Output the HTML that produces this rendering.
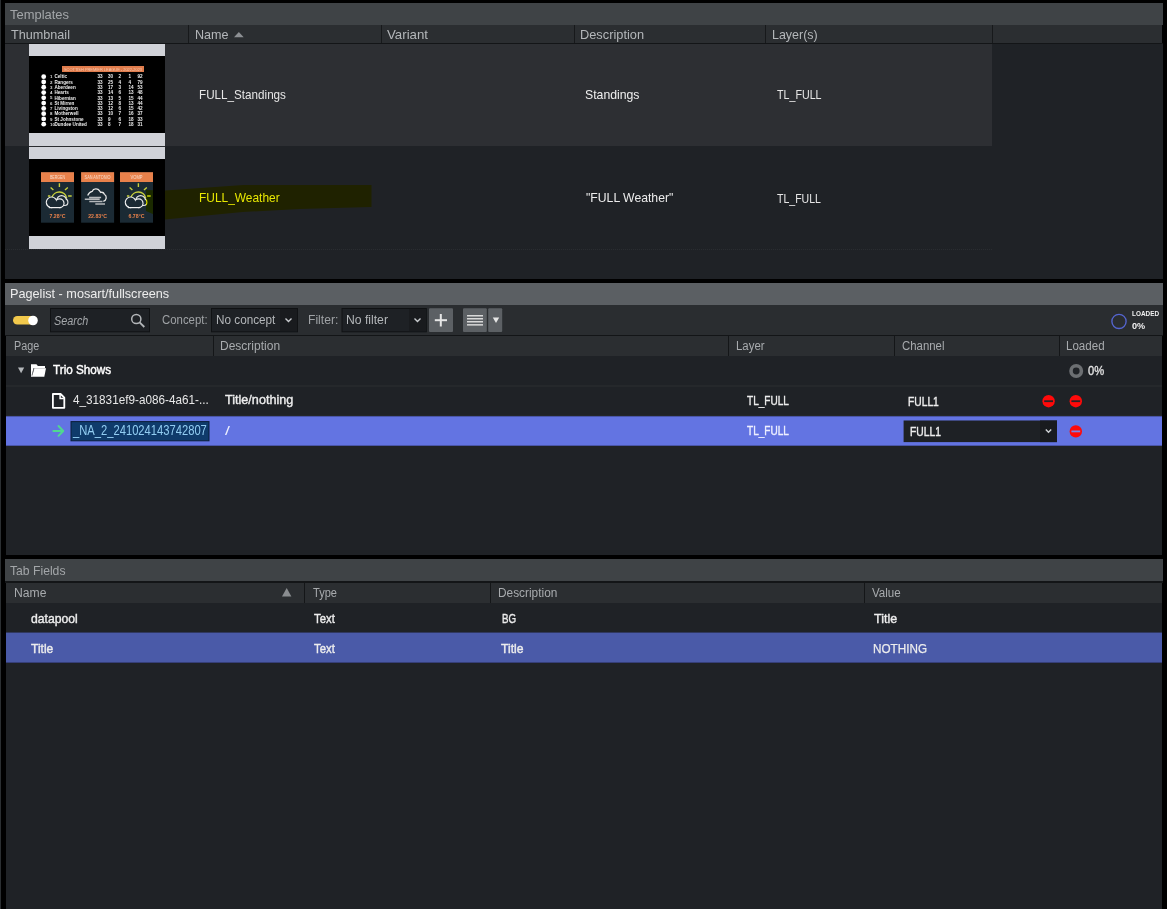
<!DOCTYPE html>
<html><head><meta charset="utf-8">
<style>
*{box-sizing:border-box;margin:0;padding:0}
html,body{width:1167px;height:909px;overflow:hidden;background:#000;font-family:"Liberation Sans",sans-serif;position:relative}
.a{position:absolute}
.t{position:absolute;white-space:nowrap;line-height:1}
</style></head>
<body>
<div class="a" style="left:0px;top:0px;width:1px;height:909px;background:#2b2f32;"></div>
<div class="a" style="left:5px;top:3px;width:1158px;height:22px;background:#3f4346;"></div>
<div class="t" style="left:9.90px;top:7.85px;font-size:13px;color:#a3a6a9;font-weight:normal;transform:scaleX(0.9949);transform-origin:0 0;">Templates</div>
<div class="a" style="left:5px;top:25px;width:1157px;height:18px;background:#2b2e31;"></div>
<div class="a" style="left:5px;top:43px;width:1158px;height:1px;background:#131517;"></div>
<div class="a" style="left:5px;top:44px;width:1158px;height:235px;background:#1f2226;"></div>
<div class="a" style="left:5px;top:44px;width:987px;height:102px;background:#2d2f33;"></div>
<div class="a" style="left:188px;top:25px;width:1px;height:18px;background:#17191b;"></div>
<div class="a" style="left:381px;top:25px;width:1px;height:18px;background:#17191b;"></div>
<div class="a" style="left:574px;top:25px;width:1px;height:18px;background:#17191b;"></div>
<div class="a" style="left:765px;top:25px;width:1px;height:18px;background:#17191b;"></div>
<div class="a" style="left:992px;top:25px;width:1px;height:18px;background:#17191b;"></div>
<div class="t" style="left:11.10px;top:27.95px;font-size:13px;color:#b4b7ba;font-weight:normal;transform:scaleX(0.9717);transform-origin:0 0;">Thumbnail</div>
<div class="t" style="left:194.73px;top:27.75px;font-size:13px;color:#b4b7ba;font-weight:normal;transform:scaleX(0.9676);transform-origin:0 0;">Name</div>
<svg class="a" style="left:234px;top:32px" width="10" height="5.5"><polygon points="0,5.2 4.85,0 9.7,5.2" fill="#8d9094"/></svg>
<div class="t" style="left:387.10px;top:27.75px;font-size:13px;color:#b4b7ba;font-weight:normal;transform:scaleX(1.0200);transform-origin:0 0;">Variant</div>
<div class="t" style="left:580.42px;top:27.65px;font-size:13px;color:#b4b7ba;font-weight:normal;transform:scaleX(0.9844);transform-origin:0 0;">Description</div>
<div class="t" style="left:771.74px;top:27.65px;font-size:13px;color:#b4b7ba;font-weight:normal;transform:scaleX(0.9587);transform-origin:0 0;">Layer(s)</div>
<div class="a" style="left:5px;top:249px;width:987px;height:1px;background:transparent;background-image:repeating-linear-gradient(90deg,#2a2d31 0 1px,transparent 1px 2px)"></div>
<div class="a" style="left:29px;top:146px;width:136px;height:1px;background:#2a2c30;"></div>
<div class="t" style="left:198.80px;top:87.85px;font-size:13px;color:#e6e6e6;font-weight:normal;transform:scaleX(0.8979);transform-origin:0 0;">FULL_Standings</div>
<div class="t" style="left:584.66px;top:87.85px;font-size:13px;color:#f0f0f0;font-weight:normal;transform:scaleX(0.9421);transform-origin:0 0;">Standings</div>
<div class="t" style="left:776.60px;top:88.15px;font-size:13px;color:#e6e6e6;font-weight:normal;transform:scaleX(0.8222);transform-origin:0 0;">TL_FULL</div>
<div class="a" style="left:29px;top:44px;width:136px;height:12px;background:#d0d2d8;"></div>
<div class="a" style="left:29px;top:56px;width:136px;height:77px;background:#000;"></div>
<div class="a" style="left:29px;top:133px;width:136px;height:13px;background:#d0d2d8;"></div>
<svg class="a" style="left:29px;top:56px" width="136" height="77"><rect x="33" y="10" width="82" height="6" fill="#e07c4c"/><text x="35" y="14.6" font-size="4.4" fill="#f6c9b0" textLength="78" lengthAdjust="spacingAndGlyphs" font-family="Liberation Sans">SCOTTISH PREMIER LEAGUE - 2022-2023</text><circle cx="14.7" cy="20.70" r="2.4" fill="#fff"/><text x="21" y="22.30" font-size="4.4" fill="#ddd" font-family="Liberation Sans" font-weight="bold">1</text><text x="25.5" y="22.40" font-size="4.6" fill="#eee" font-family="Liberation Sans" font-weight="bold">Celtic</text><text x="68.5" y="22.40" font-size="4.6" fill="#eee" font-family="Liberation Sans" font-weight="bold">33</text><text x="79" y="22.40" font-size="4.6" fill="#eee" font-family="Liberation Sans" font-weight="bold">30</text><text x="89.5" y="22.40" font-size="4.6" fill="#eee" font-family="Liberation Sans" font-weight="bold">2</text><text x="99.5" y="22.40" font-size="4.6" fill="#eee" font-family="Liberation Sans" font-weight="bold">1</text><text x="108.5" y="22.40" font-size="4.6" fill="#eee" font-family="Liberation Sans" font-weight="bold">92</text><circle cx="14.7" cy="25.98" r="2.4" fill="#fff"/><text x="21" y="27.58" font-size="4.4" fill="#ddd" font-family="Liberation Sans" font-weight="bold">2</text><text x="25.5" y="27.68" font-size="4.6" fill="#eee" font-family="Liberation Sans" font-weight="bold">Rangers</text><text x="68.5" y="27.68" font-size="4.6" fill="#eee" font-family="Liberation Sans" font-weight="bold">33</text><text x="79" y="27.68" font-size="4.6" fill="#eee" font-family="Liberation Sans" font-weight="bold">25</text><text x="89.5" y="27.68" font-size="4.6" fill="#eee" font-family="Liberation Sans" font-weight="bold">4</text><text x="99.5" y="27.68" font-size="4.6" fill="#eee" font-family="Liberation Sans" font-weight="bold">4</text><text x="108.5" y="27.68" font-size="4.6" fill="#eee" font-family="Liberation Sans" font-weight="bold">79</text><circle cx="14.7" cy="31.26" r="2.4" fill="#fff"/><text x="21" y="32.86" font-size="4.4" fill="#ddd" font-family="Liberation Sans" font-weight="bold">3</text><text x="25.5" y="32.96" font-size="4.6" fill="#eee" font-family="Liberation Sans" font-weight="bold">Aberdeen</text><text x="68.5" y="32.96" font-size="4.6" fill="#eee" font-family="Liberation Sans" font-weight="bold">33</text><text x="79" y="32.96" font-size="4.6" fill="#eee" font-family="Liberation Sans" font-weight="bold">17</text><text x="89.5" y="32.96" font-size="4.6" fill="#eee" font-family="Liberation Sans" font-weight="bold">3</text><text x="99.5" y="32.96" font-size="4.6" fill="#eee" font-family="Liberation Sans" font-weight="bold">14</text><text x="108.5" y="32.96" font-size="4.6" fill="#eee" font-family="Liberation Sans" font-weight="bold">53</text><circle cx="14.7" cy="36.54" r="2.4" fill="#fff"/><text x="21" y="38.14" font-size="4.4" fill="#ddd" font-family="Liberation Sans" font-weight="bold">4</text><text x="25.5" y="38.24" font-size="4.6" fill="#eee" font-family="Liberation Sans" font-weight="bold">Hearts</text><text x="68.5" y="38.24" font-size="4.6" fill="#eee" font-family="Liberation Sans" font-weight="bold">33</text><text x="79" y="38.24" font-size="4.6" fill="#eee" font-family="Liberation Sans" font-weight="bold">14</text><text x="89.5" y="38.24" font-size="4.6" fill="#eee" font-family="Liberation Sans" font-weight="bold">6</text><text x="99.5" y="38.24" font-size="4.6" fill="#eee" font-family="Liberation Sans" font-weight="bold">13</text><text x="108.5" y="38.24" font-size="4.6" fill="#eee" font-family="Liberation Sans" font-weight="bold">48</text><circle cx="14.7" cy="41.82" r="2.4" fill="#fff"/><text x="21" y="43.42" font-size="4.4" fill="#ddd" font-family="Liberation Sans" font-weight="bold">5</text><text x="25.5" y="43.52" font-size="4.6" fill="#eee" font-family="Liberation Sans" font-weight="bold">Hibernian</text><text x="68.5" y="43.52" font-size="4.6" fill="#eee" font-family="Liberation Sans" font-weight="bold">33</text><text x="79" y="43.52" font-size="4.6" fill="#eee" font-family="Liberation Sans" font-weight="bold">13</text><text x="89.5" y="43.52" font-size="4.6" fill="#eee" font-family="Liberation Sans" font-weight="bold">5</text><text x="99.5" y="43.52" font-size="4.6" fill="#eee" font-family="Liberation Sans" font-weight="bold">15</text><text x="108.5" y="43.52" font-size="4.6" fill="#eee" font-family="Liberation Sans" font-weight="bold">44</text><circle cx="14.7" cy="47.10" r="2.4" fill="#fff"/><text x="21" y="48.70" font-size="4.4" fill="#ddd" font-family="Liberation Sans" font-weight="bold">6</text><text x="25.5" y="48.80" font-size="4.6" fill="#eee" font-family="Liberation Sans" font-weight="bold">St Mirren</text><text x="68.5" y="48.80" font-size="4.6" fill="#eee" font-family="Liberation Sans" font-weight="bold">33</text><text x="79" y="48.80" font-size="4.6" fill="#eee" font-family="Liberation Sans" font-weight="bold">12</text><text x="89.5" y="48.80" font-size="4.6" fill="#eee" font-family="Liberation Sans" font-weight="bold">8</text><text x="99.5" y="48.80" font-size="4.6" fill="#eee" font-family="Liberation Sans" font-weight="bold">13</text><text x="108.5" y="48.80" font-size="4.6" fill="#eee" font-family="Liberation Sans" font-weight="bold">44</text><circle cx="14.7" cy="52.38" r="2.4" fill="#fff"/><text x="21" y="53.98" font-size="4.4" fill="#ddd" font-family="Liberation Sans" font-weight="bold">7</text><text x="25.5" y="54.08" font-size="4.6" fill="#eee" font-family="Liberation Sans" font-weight="bold">Livingston</text><text x="68.5" y="54.08" font-size="4.6" fill="#eee" font-family="Liberation Sans" font-weight="bold">33</text><text x="79" y="54.08" font-size="4.6" fill="#eee" font-family="Liberation Sans" font-weight="bold">12</text><text x="89.5" y="54.08" font-size="4.6" fill="#eee" font-family="Liberation Sans" font-weight="bold">6</text><text x="99.5" y="54.08" font-size="4.6" fill="#eee" font-family="Liberation Sans" font-weight="bold">15</text><text x="108.5" y="54.08" font-size="4.6" fill="#eee" font-family="Liberation Sans" font-weight="bold">42</text><circle cx="14.7" cy="57.66" r="2.4" fill="#fff"/><text x="21" y="59.26" font-size="4.4" fill="#ddd" font-family="Liberation Sans" font-weight="bold">8</text><text x="25.5" y="59.36" font-size="4.6" fill="#eee" font-family="Liberation Sans" font-weight="bold">Motherwell</text><text x="68.5" y="59.36" font-size="4.6" fill="#eee" font-family="Liberation Sans" font-weight="bold">33</text><text x="79" y="59.36" font-size="4.6" fill="#eee" font-family="Liberation Sans" font-weight="bold">10</text><text x="89.5" y="59.36" font-size="4.6" fill="#eee" font-family="Liberation Sans" font-weight="bold">7</text><text x="99.5" y="59.36" font-size="4.6" fill="#eee" font-family="Liberation Sans" font-weight="bold">16</text><text x="108.5" y="59.36" font-size="4.6" fill="#eee" font-family="Liberation Sans" font-weight="bold">37</text><circle cx="14.7" cy="62.94" r="2.4" fill="#fff"/><text x="21" y="64.54" font-size="4.4" fill="#ddd" font-family="Liberation Sans" font-weight="bold">9</text><text x="25.5" y="64.64" font-size="4.6" fill="#eee" font-family="Liberation Sans" font-weight="bold">St Johnstone</text><text x="68.5" y="64.64" font-size="4.6" fill="#eee" font-family="Liberation Sans" font-weight="bold">33</text><text x="79" y="64.64" font-size="4.6" fill="#eee" font-family="Liberation Sans" font-weight="bold">9</text><text x="89.5" y="64.64" font-size="4.6" fill="#eee" font-family="Liberation Sans" font-weight="bold">6</text><text x="99.5" y="64.64" font-size="4.6" fill="#eee" font-family="Liberation Sans" font-weight="bold">18</text><text x="108.5" y="64.64" font-size="4.6" fill="#eee" font-family="Liberation Sans" font-weight="bold">33</text><circle cx="14.7" cy="68.22" r="2.4" fill="#fff"/><text x="21" y="69.82" font-size="4.4" fill="#ddd" font-family="Liberation Sans" font-weight="bold">10</text><text x="25.5" y="69.92" font-size="4.6" fill="#eee" font-family="Liberation Sans" font-weight="bold">Dundee United</text><text x="68.5" y="69.92" font-size="4.6" fill="#eee" font-family="Liberation Sans" font-weight="bold">33</text><text x="79" y="69.92" font-size="4.6" fill="#eee" font-family="Liberation Sans" font-weight="bold">8</text><text x="89.5" y="69.92" font-size="4.6" fill="#eee" font-family="Liberation Sans" font-weight="bold">7</text><text x="99.5" y="69.92" font-size="4.6" fill="#eee" font-family="Liberation Sans" font-weight="bold">18</text><text x="108.5" y="69.92" font-size="4.6" fill="#eee" font-family="Liberation Sans" font-weight="bold">31</text></svg>
<div class="a" style="left:29px;top:147px;width:136px;height:12px;background:#d0d2d8;"></div>
<div class="a" style="left:29px;top:159px;width:136px;height:77px;background:#000;"></div>
<div class="a" style="left:29px;top:236px;width:136px;height:13px;background:#d0d2d8;"></div>
<svg class="a" style="left:29px;top:159px" width="136" height="77"><rect x="12" y="13.2" width="33" height="50.5" fill="#1b2a34"/><rect x="12" y="13.2" width="33" height="9.8" fill="#e8814b"/><text x="21.0" y="20" font-size="5" fill="#f8dccb" textLength="15" lengthAdjust="spacingAndGlyphs" font-family="Liberation Sans">BERGEN</text><text x="28.5" y="59" font-size="5.2" fill="#e8814b" text-anchor="middle" font-family="Liberation Sans" font-weight="bold">7.28°C</text><path d="M22.9,38.6 A7.6,7.6 0 0 1 37.7,39.3" fill="none" stroke="#c8d03c" stroke-width="1.5"/><path d="M30.4,24.3 L30.4,27.9 M21.6,28.4 L24.4,30.9 M38.8,28.4 L36,31 M18.9,37 L21.3,37 M39.1,37 L42.7,37" stroke="#c8d03c" stroke-width="1.4"/><g stroke="#e8e8e8" stroke-width="2.3"><circle cx="32.6" cy="41.4" r="4.2"/><circle cx="35.6" cy="43.2" r="2.7"/></g><g fill="#1b2a34"><circle cx="32.6" cy="41.4" r="4.2"/><circle cx="35.6" cy="43.2" r="2.7"/></g><g stroke="#f2f2f2" stroke-width="2.4"><circle cx="22.6" cy="43.3" r="4.7"/><circle cx="30.6" cy="44.2" r="3.8"/><rect x="21" y="43" width="10" height="5"/></g><g fill="#1b2a34"><circle cx="22.6" cy="43.3" r="4.7"/><circle cx="30.6" cy="44.2" r="3.8"/><rect x="21" y="43" width="10" height="5"/></g><rect x="52.1" y="13.2" width="33" height="50.5" fill="#1b2a34"/><rect x="52.1" y="13.2" width="33" height="9.8" fill="#e8814b"/><text x="55.599999999999994" y="20" font-size="5" fill="#f8dccb" textLength="26" lengthAdjust="spacingAndGlyphs" font-family="Liberation Sans">SAN ANTONIO</text><text x="68.6" y="59" font-size="5.2" fill="#e8814b" text-anchor="middle" font-family="Liberation Sans" font-weight="bold">22.83°C</text><path d="M58.7,36.5 C59.7,34.2 61.5,32.7 63.1,32.4 A4.2,4.2 0 0 1 70.6,31.9 L71.7,33.4 A3.2,3.2 0 0 1 75.4,35.3 A3.9,3.9 0 0 1 74.3,42.4" fill="none" stroke="#e6e6e6" stroke-width="1.3"/><path d="M60.1,38.4 L72.1,38.4 M55.800000000000004,40.2 L70.7,40.2 M60.3,42.5 L73.5,42.5 M66.3,44.9 L76.0,44.9" stroke="#b5b8bb" stroke-width="1.5"/><rect x="91" y="13.2" width="33" height="50.5" fill="#1b2a34"/><rect x="91" y="13.2" width="33" height="9.8" fill="#e8814b"/><text x="101.5" y="20" font-size="5" fill="#f8dccb" textLength="12" lengthAdjust="spacingAndGlyphs" font-family="Liberation Sans">VOMP</text><text x="107.5" y="59" font-size="5.2" fill="#e8814b" text-anchor="middle" font-family="Liberation Sans" font-weight="bold">6.78°C</text><path d="M101.9,38.6 A7.6,7.6 0 0 1 116.7,39.3" fill="none" stroke="#c8d03c" stroke-width="1.5"/><path d="M109.4,24.3 L109.4,27.9 M100.6,28.4 L103.4,30.9 M117.8,28.4 L115,31 M97.9,37 L100.3,37 M118.1,37 L121.7,37" stroke="#c8d03c" stroke-width="1.4"/><g stroke="#e8e8e8" stroke-width="2.3"><circle cx="111.6" cy="41.4" r="4.2"/><circle cx="114.6" cy="43.2" r="2.7"/></g><g fill="#1b2a34"><circle cx="111.6" cy="41.4" r="4.2"/><circle cx="114.6" cy="43.2" r="2.7"/></g><g stroke="#f2f2f2" stroke-width="2.4"><circle cx="101.6" cy="43.3" r="4.7"/><circle cx="109.6" cy="44.2" r="3.8"/><rect x="100" y="43" width="10" height="5"/></g><g fill="#1b2a34"><circle cx="101.6" cy="43.3" r="4.7"/><circle cx="109.6" cy="44.2" r="3.8"/><rect x="100" y="43" width="10" height="5"/></g></svg>
<div class="t" style="left:198.68px;top:191.35px;font-size:13px;color:#e8e8e8;font-weight:normal;transform:scaleX(0.9172);transform-origin:0 0;">FULL_Weather</div>
<div class="t" style="left:585.60px;top:191.35px;font-size:13px;color:#ececec;font-weight:normal;transform:scaleX(0.9387);transform-origin:0 0;">&quot;FULL Weather&quot;</div>
<div class="t" style="left:777.00px;top:191.55px;font-size:13px;color:#e6e6e6;font-weight:normal;transform:scaleX(0.8111);transform-origin:0 0;">TL_FULL</div>
<svg class="a" style="left:0;top:0;mix-blend-mode:multiply" width="400" height="260"><polygon points="146,190 165,190.5 243,185 371.5,185 371.5,207 300,209 243,212 165,219.5 146,211" fill="#ffff00"/></svg>
<div class="a" style="left:5px;top:283px;width:1158px;height:22px;background:#5b5f63;"></div>
<div class="t" style="left:9.51px;top:288.32px;font-size:12.8px;color:#eeeeee;font-weight:normal;transform:scaleX(0.9900);transform-origin:0 0;">Pagelist - mosart/fullscreens</div>
<div class="a" style="left:5px;top:305px;width:1158px;height:30px;background:#2a2d30;"></div>
<div class="a" style="left:5px;top:335px;width:1158px;height:1px;background:#131517;"></div>
<div class="a" style="left:6px;top:336px;width:1156px;height:20px;background:#2b2e31;"></div>
<div class="a" style="left:6px;top:356px;width:1156px;height:199px;background:#1f2226;"></div>
<svg class="a" style="left:0;top:300px" width="1167" height="40"><rect x="13" y="16" width="24" height="8.5" rx="4.25" fill="#f2c94c"/><circle cx="33" cy="20.5" r="4.8" fill="#ffffff"/><rect x="50.5" y="8.5" width="99" height="23.3" fill="#1e2125" stroke="#101214" stroke-width="1"/><circle cx="136.3" cy="19" r="4.6" fill="none" stroke="#b3b6b9" stroke-width="1.5"/><line x1="139.6" y1="22.3" x2="144.3" y2="27" stroke="#b3b6b9" stroke-width="1.8"/><rect x="211.5" y="8.5" width="86" height="23.3" fill="#1e2125" stroke="#101214" stroke-width="1"/><rect x="280" y="9" width="17" height="22.3" fill="#191b1e"/><polyline points="285.5,18.5 288.5,21.5 291.5,18.5" fill="none" stroke="#c8cbce" stroke-width="1.4"/><rect x="342" y="8.5" width="84.3" height="23.3" fill="#1e2125" stroke="#101214" stroke-width="1"/><rect x="409" y="9" width="17" height="22.3" fill="#191b1e"/><polyline points="414.5,18.5 417.5,21.5 420.5,18.5" fill="none" stroke="#c8cbce" stroke-width="1.4"/><rect x="429" y="8.3" width="24" height="23.6" rx="1" fill="#5c6064"/><rect x="434.8" y="19.2" width="12.2" height="2" fill="#e6e6e6"/><rect x="439.8" y="14" width="2" height="12.5" fill="#e6e6e6"/><rect x="463" y="8.3" width="23.8" height="23.6" rx="1" fill="#5c6064"/><rect x="467" y="15" width="16" height="1.5" fill="#d9d9d9"/><rect x="467" y="18" width="16" height="1.5" fill="#d9d9d9"/><rect x="467" y="21" width="16" height="1.5" fill="#d9d9d9"/><rect x="467" y="24.1" width="16" height="1.5" fill="#d9d9d9"/><rect x="488.2" y="8.3" width="14" height="23.6" rx="1" fill="#5c6064"/><polygon points="492.8,17.5 499.2,17.5 496,23" fill="#e6e6e6"/><circle cx="1119" cy="21.4" r="7.1" fill="none" stroke="#5565d0" stroke-width="1.35"/></svg>
<div class="t" style="left:54.20px;top:315.20px;font-size:12px;color:#a6a9ac;font-weight:normal;transform:scaleX(0.9026);transform-origin:0 0;font-style:italic;">Search</div>
<div class="t" style="left:162.30px;top:313.70px;font-size:12px;color:#9fa2a5;font-weight:normal;transform:scaleX(0.9489);transform-origin:0 0;">Concept:</div>
<div class="t" style="left:215.82px;top:313.70px;font-size:12px;color:#b4b7ba;font-weight:normal;transform:scaleX(0.9783);transform-origin:0 0;">No concept</div>
<div class="t" style="left:308.39px;top:313.70px;font-size:12px;color:#9fa2a5;font-weight:normal;transform:scaleX(1.0107);transform-origin:0 0;">Filter:</div>
<div class="t" style="left:345.99px;top:313.70px;font-size:12px;color:#b4b7ba;font-weight:normal;transform:scaleX(1.0146);transform-origin:0 0;">No filter</div>
<div class="t" style="left:1131.70px;top:311.32px;font-size:6.8px;color:#f2f2f2;font-weight:bold;transform:scaleX(0.9414);transform-origin:0 0;">LOADED</div>
<div class="t" style="left:1131.70px;top:320.84px;font-size:9.6px;color:#f2f2f2;font-weight:bold;transform:scaleX(0.9500);transform-origin:0 0;">0%</div>
<div class="a" style="left:213px;top:336px;width:1px;height:20px;background:#141618;"></div>
<div class="a" style="left:728px;top:336px;width:1px;height:20px;background:#141618;"></div>
<div class="a" style="left:894px;top:336px;width:1px;height:20px;background:#141618;"></div>
<div class="a" style="left:1059px;top:336px;width:1px;height:20px;background:#141618;"></div>
<div class="t" style="left:13.74px;top:339.98px;font-size:12.5px;color:#a8abae;font-weight:normal;transform:scaleX(0.8643);transform-origin:0 0;">Page</div>
<div class="t" style="left:219.64px;top:339.98px;font-size:12.5px;color:#a8abae;font-weight:normal;transform:scaleX(0.9607);transform-origin:0 0;">Description</div>
<div class="t" style="left:735.99px;top:339.98px;font-size:12.5px;color:#a8abae;font-weight:normal;transform:scaleX(0.9133);transform-origin:0 0;">Layer</div>
<div class="t" style="left:901.90px;top:339.98px;font-size:12.5px;color:#a8abae;font-weight:normal;transform:scaleX(0.9109);transform-origin:0 0;">Channel</div>
<div class="t" style="left:1066.48px;top:339.98px;font-size:12.5px;color:#a8abae;font-weight:normal;transform:scaleX(0.9250);transform-origin:0 0;">Loaded</div>
<div class="a" style="left:6px;top:385px;width:1156px;height:2px;background:#25282b;"></div>
<div class="a" style="left:6px;top:415px;width:1156px;height:1px;background:#24272a;"></div>
<div class="a" style="left:6px;top:416px;width:1156px;height:30px;background:#6374e2;"></div>
<div class="a" style="left:6px;top:416px;width:1156px;height:1px;background:#4a56a8;"></div>
<div class="a" style="left:6px;top:445px;width:1156px;height:1px;background:#4a56a8;"></div>
<svg class="a" style="left:0;top:356px" width="1167" height="100"><polygon points="18,11.5 24.2,11.5 21.1,17.2" fill="#b5b8bb"/><path d="M31,20.7 L31,8.2 L36.4,8.2 L37.9,10 L45,10 L45,12.2 L33.4,12.2 L31.9,20.7 Z" fill="#ffffff"/><path d="M31.7,20.7 L34.2,12.3 L46,12.3 L44.3,20.7 Z" fill="#ffffff"/><path d="M33.9,12.6 L31.9,19.6" stroke="#6a6d70" stroke-width="0.9"/><circle cx="1076.2" cy="15" r="5.2" fill="none" stroke="#6c6f72" stroke-width="3.6"/><path d="M52.9,38 L60.6,38 L64.3,41.7 L64.3,51.8 L52.9,51.8 Z" fill="none" stroke="#ffffff" stroke-width="1.8" stroke-linejoin="round"/><path d="M60.1,38.6 L60.1,42.4 L63.8,42.4" fill="none" stroke="#ffffff" stroke-width="1.5"/><circle cx="1048.6" cy="45.2" r="6.2" fill="#ff0a0a"/><rect x="1044.2" y="44.3" width="8.8" height="1.8" fill="#2a2326"/><circle cx="1075.8" cy="45.2" r="6.2" fill="#ff0a0a"/><rect x="1071.4" y="44.3" width="8.8" height="1.8" fill="#2a2326"/><circle cx="1075.8" cy="75.4" r="6.2" fill="#ff0a0a"/><rect x="1071.4" y="74.5" width="8.8" height="1.8" fill="#7a86e6"/><path d="M53.3,75 L62.6,75 M58.5,70 L63.3,75 L58.5,79.8" fill="none" stroke="#4fd890" stroke-width="1.9" stroke-linecap="round" stroke-linejoin="round"/><rect x="71" y="65.6" width="138" height="19.2" fill="#0f3b6b" stroke="#0a1e3a" stroke-width="1"/><rect x="903.6" y="64.5" width="153.4" height="21.6" fill="#1e2125"/><rect x="1040" y="64.5" width="17" height="21.6" fill="#191b1e"/><polyline points="1045.8,73.5 1048.5,76.2 1051.2,73.5" fill="none" stroke="#d0d3d6" stroke-width="1.4"/></svg>
<div class="t" style="left:53.00px;top:363.35px;font-size:13px;color:#ffffff;font-weight:normal;transform:scaleX(0.9015);transform-origin:0 0;-webkit-text-stroke:0.45px #ffffff;">Trio Shows</div>
<div class="t" style="left:1087.80px;top:364.62px;font-size:12.8px;color:#e6e6e6;font-weight:normal;transform:scaleX(0.8737);transform-origin:0 0;-webkit-text-stroke:0.3px #e6e6e6;">0%</div>
<div class="t" style="left:72.80px;top:393.32px;font-size:13.5px;color:#e8e8e8;font-weight:normal;transform:scaleX(0.8690);transform-origin:0 0;">4_31831ef9-a086-4a61-...</div>
<div class="t" style="left:225.40px;top:393.30px;font-size:13.3px;color:#ededed;font-weight:normal;transform:scaleX(0.9486);transform-origin:0 0;-webkit-text-stroke:0.4px #ededed;">Title/nothing</div>
<div class="t" style="left:747.30px;top:394.32px;font-size:13.5px;color:#ededed;font-weight:normal;transform:scaleX(0.7456);transform-origin:0 0;-webkit-text-stroke:0.4px #ededed;">TL_FULL</div>
<div class="t" style="left:907.80px;top:394.65px;font-size:13px;color:#ededed;font-weight:normal;transform:scaleX(0.7897);transform-origin:0 0;-webkit-text-stroke:0.4px #ededed;">FULL1</div>
<div class="t" style="left:72.81px;top:423.57px;font-size:13.8px;color:#92cdf2;font-weight:normal;transform:scaleX(0.8114);transform-origin:0 0;">_NA_2_241024143742807</div>
<div class="t" style="left:225.00px;top:424.05px;font-size:13px;color:#eef0ff;font-weight:normal;transform:scaleX(1.3500);transform-origin:0 0;">/</div>
<div class="t" style="left:747.30px;top:424.42px;font-size:13.5px;color:#eef0ff;font-weight:normal;transform:scaleX(0.7456);transform-origin:0 0;-webkit-text-stroke:0.4px #eef0ff;">TL_FULL</div>
<div class="t" style="left:909.80px;top:424.65px;font-size:13px;color:#ededed;font-weight:normal;transform:scaleX(0.7923);transform-origin:0 0;-webkit-text-stroke:0.4px #ededed;">FULL1</div>
<div class="a" style="left:5px;top:559px;width:1158px;height:22px;background:#3f4346;"></div>
<div class="t" style="left:10.30px;top:564.96px;font-size:12.4px;color:#a3a6a9;font-weight:normal;transform:scaleX(0.9821);transform-origin:0 0;">Tab Fields</div>
<div class="a" style="left:5px;top:581px;width:1158px;height:2px;background:#131517;"></div>
<div class="a" style="left:6px;top:583px;width:1156px;height:20px;background:#2b2e31;"></div>
<div class="a" style="left:6px;top:603px;width:1156px;height:306px;background:#1f2226;"></div>
<div class="a" style="left:304px;top:583px;width:1px;height:20px;background:#141618;"></div>
<div class="a" style="left:490px;top:583px;width:1px;height:20px;background:#141618;"></div>
<div class="a" style="left:864px;top:583px;width:1px;height:20px;background:#141618;"></div>
<svg class="a" style="left:282px;top:588px" width="10" height="9"><polygon points="0,8.5 4.7,0 9.4,8.5" fill="#8a8d90"/></svg>
<div class="t" style="left:13.63px;top:586.67px;font-size:12.5px;color:#a8abae;font-weight:normal;transform:scaleX(0.9719);transform-origin:0 0;">Name</div>
<div class="t" style="left:312.70px;top:586.67px;font-size:12.5px;color:#a8abae;font-weight:normal;transform:scaleX(0.8852);transform-origin:0 0;">Type</div>
<div class="t" style="left:498.05px;top:586.67px;font-size:12.5px;color:#a8abae;font-weight:normal;transform:scaleX(0.9492);transform-origin:0 0;">Description</div>
<div class="t" style="left:871.70px;top:586.67px;font-size:12.5px;color:#a8abae;font-weight:normal;transform:scaleX(0.9258);transform-origin:0 0;">Value</div>
<div class="a" style="left:6px;top:632px;width:1156px;height:31px;background:#4a5aa8;"></div>
<div class="a" style="left:6px;top:632px;width:1156px;height:1px;background:#30385f;"></div>
<div class="a" style="left:6px;top:662px;width:1156px;height:1px;background:#363f78;"></div>
<div class="t" style="left:31.20px;top:611.58px;font-size:13.2px;color:#ededed;font-weight:normal;transform:scaleX(0.9255);transform-origin:0 0;-webkit-text-stroke:0.4px #ededed;">datapool</div>
<div class="t" style="left:314.10px;top:611.68px;font-size:13.2px;color:#ededed;font-weight:normal;transform:scaleX(0.8600);transform-origin:0 0;-webkit-text-stroke:0.4px #ededed;">Text</div>
<div class="t" style="left:501.50px;top:611.68px;font-size:13.2px;color:#ededed;font-weight:normal;transform:scaleX(0.7421);transform-origin:0 0;-webkit-text-stroke:0.4px #ededed;">BG</div>
<div class="t" style="left:873.50px;top:611.68px;font-size:13.2px;color:#ededed;font-weight:normal;transform:scaleX(0.9458);transform-origin:0 0;-webkit-text-stroke:0.4px #ededed;">Title</div>
<div class="t" style="left:31.20px;top:641.58px;font-size:13.2px;color:#ededed;font-weight:normal;transform:scaleX(0.9125);transform-origin:0 0;-webkit-text-stroke:0.4px #ededed;">Title</div>
<div class="t" style="left:314.10px;top:641.58px;font-size:13.2px;color:#ededed;font-weight:normal;transform:scaleX(0.8600);transform-origin:0 0;-webkit-text-stroke:0.4px #ededed;">Text</div>
<div class="t" style="left:501.00px;top:641.58px;font-size:13.2px;color:#ededed;font-weight:normal;transform:scaleX(0.9208);transform-origin:0 0;-webkit-text-stroke:0.4px #ededed;">Title</div>
<div class="t" style="left:873.11px;top:641.58px;font-size:13.2px;color:#ededed;font-weight:normal;transform:scaleX(0.8881);transform-origin:0 0;-webkit-text-stroke:0.25px #ededed;">NOTHING</div>
</body></html>
